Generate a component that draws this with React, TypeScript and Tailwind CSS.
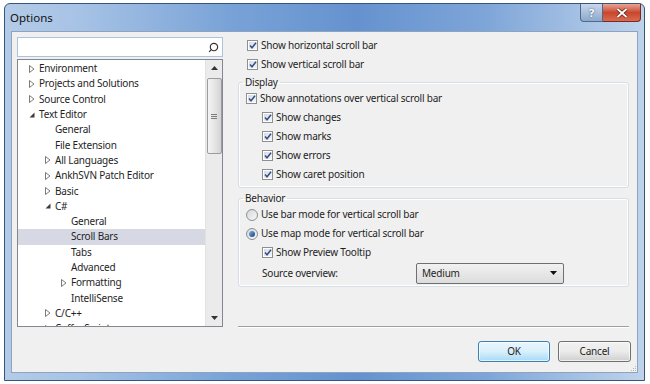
import { Search } from "lucide-react";

type Node = { label: string; level: number; arrow?: "open" | "closed"; selected?: boolean };

const nodes: Node[] = [
  { label: "Environment", level: 0, arrow: "closed" },
  { label: "Projects and Solutions", level: 0, arrow: "closed" },
  { label: "Source Control", level: 0, arrow: "closed" },
  { label: "Text Editor", level: 0, arrow: "open" },
  { label: "General", level: 1 },
  { label: "File Extension", level: 1 },
  { label: "All Languages", level: 1, arrow: "closed" },
  { label: "AnkhSVN Patch Editor", level: 1, arrow: "closed" },
  { label: "Basic", level: 1, arrow: "closed" },
  { label: "C#", level: 1, arrow: "open" },
  { label: "General", level: 2 },
  { label: "Scroll Bars", level: 2, selected: true },
  { label: "Tabs", level: 2 },
  { label: "Advanced", level: 2 },
  { label: "Formatting", level: 2, arrow: "closed" },
  { label: "IntelliSense", level: 2 },
  { label: "C/C++", level: 1, arrow: "closed" },
  { label: "CoffeeScript", level: 1, arrow: "closed" },
];

const indent = ["pl-[11px]", "pl-[27px]", "pl-[43px]"];

function Arrow({ kind }: { kind?: "open" | "closed" }) {
  if (!kind) return <span className="w-[10px] shrink-0" />;
  return (
    <span className="w-[10px] shrink-0 flex items-center">
      {kind === "closed" ? (
        <svg width="6" height="8" viewBox="0 0 6 8">
          <path d="M0.5 0.5 L5 4 L0.5 7.5 Z" fill="none" stroke="#7a7a7a" strokeWidth="1" />
        </svg>
      ) : (
        <svg width="6" height="6" viewBox="0 0 6 6">
          <path d="M5.5 0.5 L5.5 5.5 L0.5 5.5 Z" fill="#3c3c3c" />
        </svg>
      )}
    </span>
  );
}

function Check() {
  return (
    <span className="w-[11px] h-[11px] shrink-0 border border-[#8e8f8f] bg-white p-[1px] flex">
      <span className="flex-1 bg-gradient-to-br from-[#d7dbe2] to-[#f6f6f6] flex items-center justify-center">
        <svg width="8" height="7" viewBox="0 0 8 7">
          <path d="M1 3.6 L3 5.8 L7 0.8" fill="none" stroke="#2f4f8f" strokeWidth="1.5" />
        </svg>
      </span>
    </span>
  );
}

function Radio({ on }: { on?: boolean }) {
  return (
    <span className="w-[12px] h-[12px] shrink-0 rounded-full border border-[#8e8f8f] bg-gradient-to-br from-[#d4d7dd] to-[#f8f8f8] flex items-center justify-center">
      {on && <span className="w-[6px] h-[6px] rounded-full bg-gradient-to-br from-[#7fb6e8] to-[#12427e]" />}
    </span>
  );
}

function CheckRow({ label, pad }: { label: string; pad: string }) {
  return (
    <div className={`h-[19px] flex items-center gap-[3px] ${pad}`}>
      <Check />
      <span>{label}</span>
    </div>
  );
}

export default function App() {
  return (
    <div className="w-[650px] h-[384px] bg-white overflow-hidden font-['Segoe_UI','Noto_Sans',sans-serif] text-[10px] tracking-[-0.2px] text-[#1e1e1e]">
      <div className="ml-[4px] mt-[3px] w-[641px] h-[378px] rounded-t-[6px] border border-[#34557f] bg-[linear-gradient(90deg,#b3cbe7_0%,#a6c2e5_12%,#79a3d7_35%,#6592cf_55%,#7ea5d8_75%,#bfd3eb_100%)] flex flex-col">
        {/* Title bar */}
        <div className="h-[27px] flex items-start shrink-0">
          <span className="ml-[5px] mt-[7px] text-[11.5px] tracking-normal text-[#111] leading-[14px]">Options</span>
          <div className="ml-auto mr-[3px] flex">
            <div className="w-[23px] h-[18px] rounded-bl-[4px] border border-[#4b6a91] border-t-0 bg-gradient-to-b from-[#c8d7ea] to-[#8ea9cc] flex items-center justify-center text-[11px] font-bold text-white leading-none [text-shadow:0_0_2px_#2a4466]">
              ?
            </div>
            <div className="w-[38px] h-[18px] rounded-br-[4px] border border-[#7a2a20] border-t-0 border-l-0 bg-gradient-to-b from-[#e7a597] via-[#c9462d] to-[#d86a4f] flex items-center justify-center">
              <svg width="12" height="10" viewBox="0 0 12 10">
                <path d="M1.5 1 L10.5 9 M10.5 1 L1.5 9" stroke="#5a1a10" strokeWidth="3.2" />
                <path d="M1.5 1 L10.5 9 M10.5 1 L1.5 9" stroke="#ffffff" strokeWidth="1.8" />
              </svg>
            </div>
          </div>
        </div>

        {/* Client area */}
        <div className="mx-[6px] mb-[7px] flex-1 bg-[#f0f0f0] border border-[#8ea3bf] flex relative">
          {/* Left column */}
          <div className="pl-[5px] pt-[5px] w-[211px] shrink-0">
            <div className="h-[20px] border border-[#abc3df] bg-white flex items-center justify-end pr-[3px]">
              <Search className="w-[11px] h-[11px] text-[#333] -scale-x-100" strokeWidth={2.5} />
            </div>
            <div className="mt-[2px] h-[268px] border border-[#828790] bg-white flex overflow-hidden">
              <div className="flex-1 pt-[1px] overflow-hidden">
                {nodes.map((n, i) => (
                  <div
                    key={i}
                    className={`h-[15.3px] flex items-center ${indent[n.level]} ${n.selected ? "bg-[#d6d9e4]" : ""}`}
                  >
                    <Arrow kind={n.arrow} />
                    <span>{n.label}</span>
                  </div>
                ))}
              </div>
              {/* Scrollbar */}
              <div className="w-[17px] shrink-0 bg-[#ebebeb] border-l border-[#e2e2e2] flex flex-col items-center">
                <div className="h-[16px] flex items-center justify-center">
                  <svg width="7" height="4" viewBox="0 0 7 4"><path d="M3.5 0 L7 4 L0 4 Z" fill="#333" /></svg>
                </div>
                <div className="mt-[2px] w-[15px] h-[76px] rounded-[2px] border border-[#9c9c9c] bg-gradient-to-r from-[#f3f3f3] via-[#e6e6e6] to-[#d3d3d3] flex flex-col items-center justify-center gap-[1px]">
                  <span className="w-[6px] h-px bg-[#7a7a7a]" />
                  <span className="w-[6px] h-px bg-[#7a7a7a]" />
                  <span className="w-[6px] h-px bg-[#7a7a7a]" />
                </div>
                <div className="mt-auto h-[16px] flex items-center justify-center">
                  <svg width="7" height="4" viewBox="0 0 7 4"><path d="M0 0 L7 0 L3.5 4 Z" fill="#333" /></svg>
                </div>
              </div>
            </div>
          </div>

          {/* Right column */}
          <div className="ml-[15px] w-[391px] pt-[4px] flex flex-col">
            <CheckRow label="Show horizontal scroll bar" pad="pl-[9px]" />
            <CheckRow label="Show vertical scroll bar" pad="pl-[9px]" />

            <fieldset className="mt-[1px] border border-[#d5dfe5] rounded-[3px] pb-[3px] shadow-[inset_0_0_0_1px_#ffffff]">
              <legend className="ml-[4px] px-[2px] leading-[14px]">Display</legend>
              <CheckRow label="Show annotations over vertical scroll bar" pad="pl-[7px]" />
              <CheckRow label="Show changes" pad="pl-[23px]" />
              <CheckRow label="Show marks" pad="pl-[23px]" />
              <CheckRow label="Show errors" pad="pl-[23px]" />
              <CheckRow label="Show caret position" pad="pl-[23px]" />
            </fieldset>

            <fieldset className="mt-[3px] border border-[#d5dfe5] rounded-[3px] pb-[2px] shadow-[inset_0_0_0_1px_#ffffff]">
              <legend className="ml-[4px] px-[2px] leading-[14px]">Behavior</legend>
              <div className="h-[19px] flex items-center gap-[3px] pl-[7px]">
                <Radio />
                <span>Use bar mode for vertical scroll bar</span>
              </div>
              <div className="h-[19px] flex items-center gap-[3px] pl-[7px]">
                <Radio on />
                <span>Use map mode for vertical scroll bar</span>
              </div>
              <CheckRow label="Show Preview Tooltip" pad="pl-[23px]" />
              <div className="h-[22px] flex items-center pl-[23px]">
                <span className="w-[154px]">Source overview:</span>
                <div className="w-[148px] h-[21px] rounded-[2px] border border-[#707070] bg-gradient-to-b from-[#f2f2f2] to-[#dcdcdc] flex items-center pl-[5px] pr-[6px]">
                  <span>Medium</span>
                  <svg className="ml-auto" width="7" height="4" viewBox="0 0 7 4"><path d="M0 0 L7 0 L3.5 4 Z" fill="#111" /></svg>
                </div>
              </div>
            </fieldset>

            <div className="mt-[39px] h-px bg-[#a0a0a0] shadow-[0_1px_0_#ffffff]" />

            <div className="mt-[14px] -mr-[2px] flex justify-end gap-[8px]">
              <button className="w-[72px] h-[21px] rounded-[3px] border border-[#3c7fb1] bg-gradient-to-b from-[#eaf6fd] via-[#d9f0fc] to-[#a7d9f5] shadow-[inset_0_0_0_1px_#ffffffaa] text-[#1e1e1e]">
                OK
              </button>
              <button className="w-[73px] h-[21px] rounded-[3px] border border-[#707070] bg-gradient-to-b from-[#f2f2f2] via-[#ebebeb] to-[#cfcfcf] shadow-[inset_0_0_0_1px_#ffffffaa] text-[#1e1e1e]">
                Cancel
              </button>
            </div>
          </div>

          {/* size grip */}
          <div className="absolute right-[1px] bottom-[1px] grid grid-cols-3 gap-[1px]">
            <span className="w-[1px] h-[1px]" />
            <span className="w-[1px] h-[1px]" />
            <span className="w-[1px] h-[1px] bg-[#b8b8b8]" />
            <span className="w-[1px] h-[1px]" />
            <span className="w-[1px] h-[1px] bg-[#b8b8b8]" />
            <span className="w-[1px] h-[1px] bg-[#b8b8b8]" />
            <span className="w-[1px] h-[1px] bg-[#b8b8b8]" />
            <span className="w-[1px] h-[1px] bg-[#b8b8b8]" />
            <span className="w-[1px] h-[1px] bg-[#b8b8b8]" />
          </div>
        </div>
      </div>
    </div>
  );
}
